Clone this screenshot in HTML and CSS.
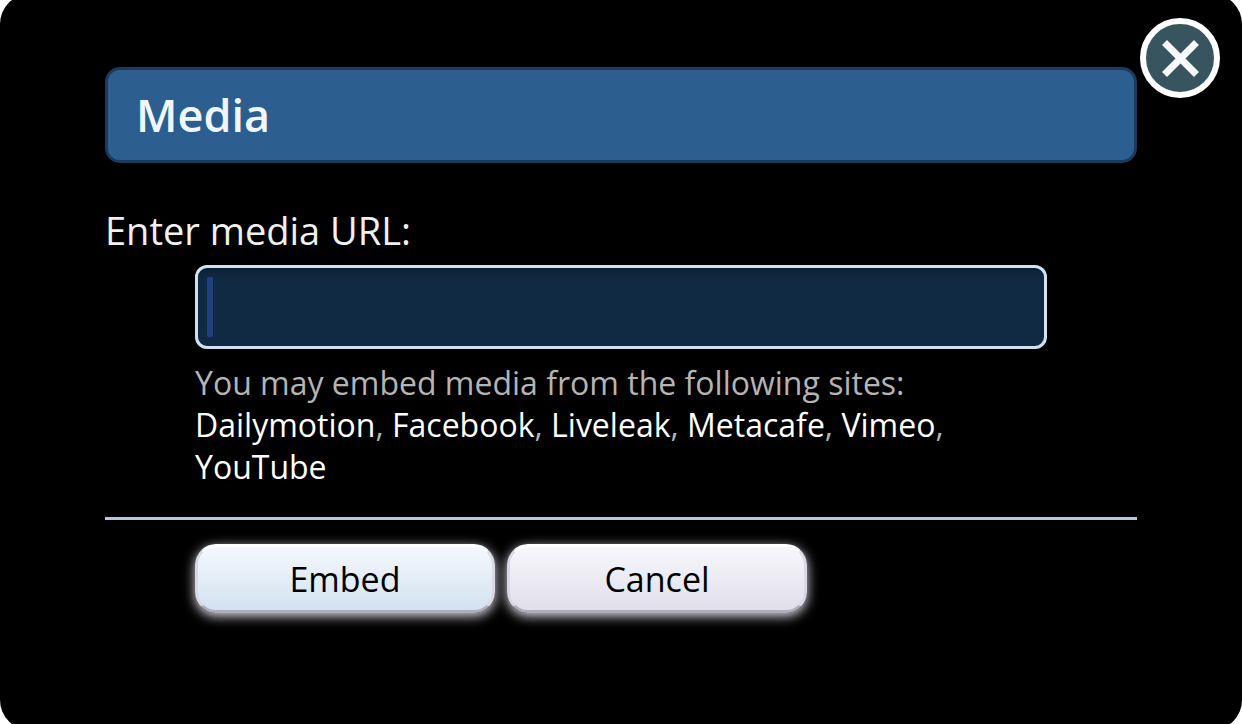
FILE: index.html
```html
<!DOCTYPE html>
<html lang="en">
<head>
<meta charset="utf-8">
<meta name="viewport" content="width=device-width, initial-scale=1">
<title>Media</title>
<link rel="stylesheet" href="styles.css">
</head>
<body>
<main class="overlay" role="dialog" aria-labelledby="title">
  <button class="close" type="button" aria-label="Close">
    <svg class="close-icon" viewBox="0 0 80 80" aria-hidden="true">
      <circle cx="40" cy="40" r="37" fill="#38555f" stroke="#fff" stroke-width="6"/>
      <path d="M27 27 L54 54 M54 27 L27 54" fill="none" stroke="#f7f9fa" stroke-width="7" stroke-linecap="square"/>
    </svg>
  </button>
  <h1 class="heading" id="title">Media</h1>
  <form class="form">
    <label class="label" for="media-url">Enter media URL:</label>
    <div class="content">
      <div class="field">
        <input class="input" id="media-url" type="text" aria-describedby="sites">
        <span class="caret" aria-hidden="true"></span>
      </div>
      <p class="hint" id="sites">You may embed media from the following sites:<br><span class="site">Dailymotion</span>, <span class="site">Facebook</span>, <span class="site">Liveleak</span>, <span class="site">Metacafe</span>, <span class="site">Vimeo</span>, <br><span class="site">YouTube</span></p>
    </div>
    <div class="actions">
      <button class="button button-primary" type="button">Embed</button>
      <button class="button" type="button">Cancel</button>
    </div>
  </form>
</main>
</body>
</html>
```
FILE: styles.css
```css
* {
  box-sizing: border-box;
}

body {
  margin: 0;
  min-height: 100vh;
  overflow: hidden;
  display: flex;
  background: #fff;
  font-family: "Open Sans", "Noto Sans", sans-serif;
}

.overlay {
  position: relative;
  flex: 1;
  margin: -6px 0;
  padding: 73px 105px;
  border-radius: 30px;
  background: #000;
}

.close {
  position: absolute;
  top: 24px;
  right: 22px;
  width: 80px;
  height: 80px;
  padding: 0;
  border: 0;
  background: none;
}

.close-icon {
  display: block;
  width: 100%;
  height: 100%;
}

.heading {
  margin: 0;
  padding: 15px 28px;
  border: 3px solid #1c3a59;
  border-radius: 15px;
  background: #2d5e90;
  color: #f0f7fc;
  font-size: 45px;
  line-height: 60px;
  font-weight: 600;
}

.label {
  display: block;
  margin: 42px 0 10px;
  color: #f0f0f0;
  font-size: 38px;
  line-height: 50px;
}

.content {
  padding: 0 90px;
}

.field {
  position: relative;
}

.input {
  display: block;
  width: 100%;
  height: 84px;
  padding: 9px;
  border: 3px solid #d1e1f2;
  border-radius: 12px;
  outline: 0;
  background: linear-gradient(#0c2034, #102a44 12px);
  color: #f0f7fc;
  font: inherit;
  font-size: 38px;
}

.caret {
  position: absolute;
  top: 12px;
  left: 12px;
  width: 6px;
  height: 60px;
  border-radius: 2px;
  background: #213f7d;
}

.hint {
  margin: 13px 0 29px;
  color: #b4b4b4;
  font-size: 32px;
  line-height: 42px;
}

.site {
  color: #fff;
}

.actions {
  display: flex;
  gap: 12px;
  padding: 24px 90px;
  border-top: 3px solid #b0c9df;
}

.button {
  width: 300px;
  height: 69px;
  padding: 0;
  border: 3px solid;
  border-color: #fff #d9d8e4 #aeadb8;
  border-radius: 21px;
  background: linear-gradient(#f7f7fb, #e0dfec);
  box-shadow: 0 3px 12px #dddde8;
  color: #000;
  font-family: inherit;
  font-size: 34px;
  line-height: 60px;
}

.button-primary {
  background: linear-gradient(#f5f8fd, #d2e2f1);
}
```
